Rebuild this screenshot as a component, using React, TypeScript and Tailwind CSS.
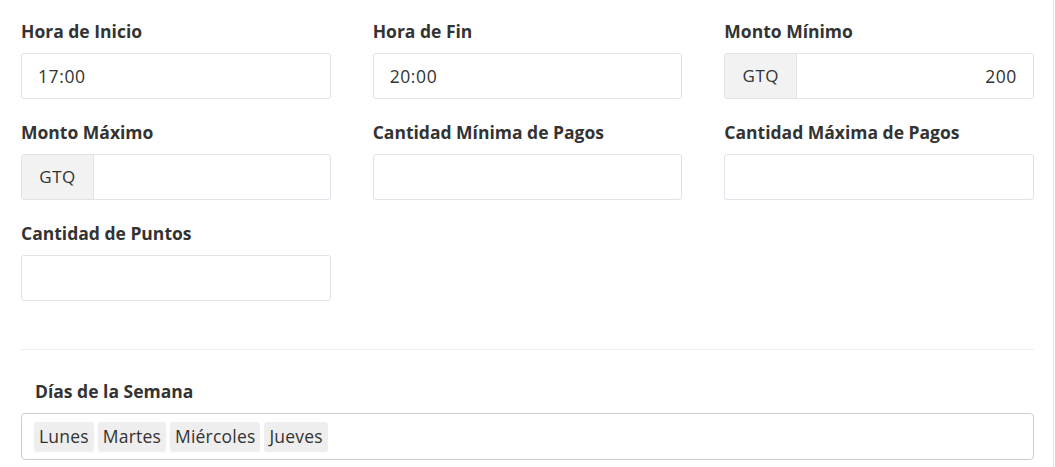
import React from 'react';

const font = { fontFamily: '"Open Sans", Lato, Arial, sans-serif' };

interface FieldProps {
  label: string;
  value?: string;
  addon?: string;
  alignRight?: boolean;
}

const Field: React.FC<FieldProps> = ({ label, value = '', addon, alignRight }) => (
  <div className="flex flex-col">
    <label className="mb-[10px] text-[17.5px] font-bold leading-[24px] text-[#333]">{label}</label>
    <div className="flex h-[46px] overflow-hidden rounded-[3px] border border-[#dde3e8] bg-white">
      {addon && (
        <div className="flex w-[72px] items-center justify-center border-r border-[#dde3e8] bg-[#f2f2f2] text-[17px] tracking-[0.5px] text-[#333]">
          {addon}
        </div>
      )}
      <div
        className={`flex flex-1 items-center px-[16px] text-[17.5px] tracking-[0.6px] text-[#333] ${
          alignRight ? 'justify-end' : 'justify-start'
        }`}
      >
        {value}
      </div>
    </div>
  </div>
);

const days = ['Lunes', 'Martes', 'Miércoles', 'Jueves'];

export default function App() {
  return (
    <div className="h-[467px] w-[1054px] border-r border-[#dde3e8] bg-white" style={font}>
      <div className="pl-[21px] pr-[19px] pt-[19px]">
        <div className="grid grid-cols-3 gap-x-[42px] gap-y-[21px]">
          <Field label="Hora de Inicio" value="17:00" />
          <Field label="Hora de Fin" value="20:00" />
          <Field label="Monto Mínimo" value="200" addon="GTQ" alignRight />
          <Field label="Monto Máximo" addon="GTQ" />
          <Field label="Cantidad Mínima de Pagos" />
          <Field label="Cantidad Máxima de Pagos" />
          <Field label="Cantidad de Puntos" />
        </div>

        <div className="mt-[48px] border-t border-[#eeeeee]" />

        <div className="pt-[29px]">
          <label className="mb-[10px] block pl-[14px] text-[17.5px] font-bold leading-[24px] text-[#333]">
            Días de la Semana
          </label>
          <div className="flex h-[47px] items-center gap-[4px] rounded-[4px] border border-[#cccccc] px-[12px]">
            {days.map((d) => (
              <span
                key={d}
                className="flex h-[30px] items-center rounded-[3px] bg-[#eeeeee] px-[5px] text-[17.5px] tracking-[0.2px] text-[#333]"
              >
                {d}
              </span>
            ))}
          </div>
        </div>
      </div>
    </div>
  );
}
